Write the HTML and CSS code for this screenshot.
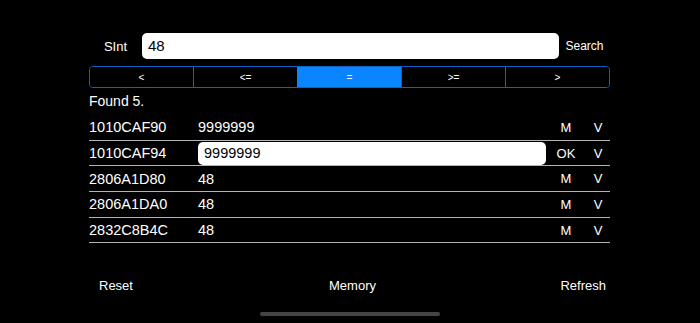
FILE: index.html
```html
<!DOCTYPE html>
<html lang="en">
<head>
    <meta charset="UTF-8">
    <meta name="viewport" content="width=device-width, initial-scale=1.0">
    <title>Memory</title>
    <link rel="stylesheet" href="styles.css">
</head>
<body>
    <div class="screen">
        <div class="search-row">
            <span class="type-label">SInt</span>
            <div class="search-field">48</div>
            <button class="link search-btn">Search</button>
        </div>

        <div class="segments">
            <button class="segment">&lt;</button>
            <button class="segment">&lt;=</button>
            <button class="segment selected">=</button>
            <button class="segment">&gt;=</button>
            <button class="segment">&gt;</button>
        </div>

        <div class="found">Found 5.</div>

        <div class="results">
            <div class="row">
                <span class="addr">1010CAF90</span>
                <span class="value">9999999</span>
                <button class="link act">M</button>
                <button class="link act v">V</button>
            </div>
            <div class="row">
                <span class="addr">1010CAF94</span>
                <span class="value"><span class="edit-field">9999999</span></span>
                <button class="link act">OK</button>
                <button class="link act v">V</button>
            </div>
            <div class="row">
                <span class="addr">2806A1D80</span>
                <span class="value">48</span>
                <button class="link act">M</button>
                <button class="link act v">V</button>
            </div>
            <div class="row">
                <span class="addr">2806A1DA0</span>
                <span class="value">48</span>
                <button class="link act">M</button>
                <button class="link act v">V</button>
            </div>
            <div class="row">
                <span class="addr">2832C8B4C</span>
                <span class="value">48</span>
                <button class="link act">M</button>
                <button class="link act v">V</button>
            </div>
        </div>
    </div>

    <div class="toolbar">
        <button class="link reset">Reset</button>
        <button class="link memory">Memory</button>
        <button class="link refresh">Refresh</button>
    </div>
    <div class="home-indicator"></div>
</body>
</html>
```

FILE: styles.css
```css
body {
    margin: 0;
    height: 323px;
    background-color: #000;
    color: #fff;
    font-family: "Liberation Sans", Arial, sans-serif;
    font-size: 13px;
    overflow: hidden;
}

.link {
    background: none;
    border: none;
    padding: 0;
    color: #fff;
    font-family: inherit;
    font-size: 13px;
    cursor: pointer;
}

.screen {
    width: 521px;
    margin-left: 89px;
    padding-top: 33px;
}

.search-row {
    display: flex;
    align-items: center;
    height: 26px;
}

.type-label {
    width: 53px;
    text-align: center;
}

.search-field {
    flex: 1;
    height: 26px;
    line-height: 26px;
    background-color: #fff;
    color: #000;
    border-radius: 5px;
    padding-left: 6px;
    font-size: 15px;
}

.search-btn {
    width: 51px;
    text-align: center;
    font-size: 12px;
}

.segments {
    display: flex;
    margin-top: 7px;
    height: 22px;
    border: 1px solid #0a64c8;
    border-radius: 4px;
    box-sizing: border-box;
    overflow: hidden;
}

.segment {
    flex: 1;
    background: #000;
    border: none;
    border-left: 1px solid #0a64c8;
    color: #fff;
    font-family: inherit;
    font-size: 10px;
    padding: 0;
}

.segment:first-child {
    border-left: none;
}

.segment.selected {
    background-color: #0a84ff;
    border-left-color: #0a84ff;
}

.found {
    margin-top: 5px;
    height: 16px;
    line-height: 16px;
    font-size: 14px;
}

.results {
    margin-top: 6px;
}

.row {
    display: flex;
    align-items: center;
    height: 24.7px;
    border-bottom: 1px solid #b4b4b4;
    font-size: 14.5px;
}

.addr {
    width: 109px;
}

.value {
    flex: 1;
}

.edit-field {
    display: block;
    height: 23px;
    line-height: 23px;
    margin-top: 1px;
    padding-left: 6px;
    background-color: #fff;
    color: #000;
    border-radius: 5px;
}

.act {
    width: 40px;
    text-align: center;
}

.act.v {
    width: 24px;
}

.toolbar {
    display: grid;
    grid-template-columns: 1fr auto 1fr;
    align-items: center;
    margin-top: 32px;
    padding: 0 94px 0 99px;
    height: 20px;
}

.reset {
    justify-self: start;
}

.refresh {
    justify-self: end;
}

.home-indicator {
    width: 180px;
    height: 4px;
    margin: 17px auto 0;
    border-radius: 2px;
    background-color: #444;
}
```
